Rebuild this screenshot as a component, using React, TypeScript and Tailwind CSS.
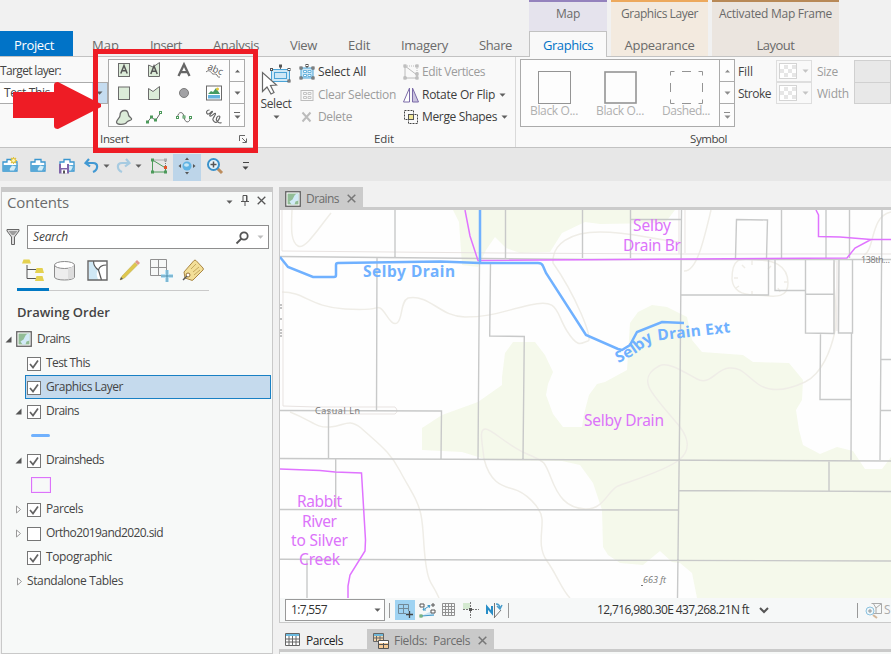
import { useLayoutEffect, useRef, useState } from "react";
import type { ReactNode } from "react";

/* Text that spreads its letters over the width given by its class. */
function T({ c, children }: { c: string; children: string }) {
  const outer = useRef<HTMLSpanElement>(null);
  const inner = useRef<HTMLSpanElement>(null);
  const [ls, setLs] = useState(0);
  useLayoutEffect(() => {
    if (outer.current && inner.current) {
      const natural = inner.current.getBoundingClientRect().width - ls * children.length;
      setLs((outer.current.clientWidth - natural) / children.length);
    }
  }, [children]);
  return (
    <span ref={outer} className={"block shrink-0 whitespace-nowrap leading-4 " + c}>
      <span ref={inner} style={{ letterSpacing: ls }}>{children}</span>
    </span>
  );
}

function Svg({ w, h, c = "", children }: { w: number; h: number; c?: string; children: ReactNode }) {
  return (
    <svg width={w} height={h} viewBox={`0 0 ${w} ${h}`} className={"block shrink-0 overflow-visible " + c} fill="none">
      {children}
    </svg>
  );
}

function Caret({ c = "", color = "#5f5f5f" }: { c?: string; color?: string }) {
  return <Svg w={7} h={4} c={c}><path d="M0.5 0.5h6L3.5 3.7z" fill={color} /></Svg>;
}

function Node({ x, y, color = "#4d9a5b" }: { x: number; y: number; color?: string }) {
  return <rect x={x - 1} y={y - 1} width="2" height="2" fill="#fff" stroke={color} strokeWidth="1" />;
}

function GalleryStrip({ dim = false }: { dim?: boolean }) {
  const k = dim ? "#8c8c8c" : "#666";
  return (
    <div className="flex w-[15px] shrink-0 flex-col border-l border-[#ababab] bg-[#fdfdfd]">
      <div className="flex h-[22px] items-center justify-center border-b border-[#ababab]">
        <Svg w={7} h={4}><path d="M1 3.5h5L3.5 0.8z" fill={k} /></Svg>
      </div>
      <div className="flex h-[22px] items-center justify-center border-b border-[#ababab]"><Caret color={k} /></div>
      <div className="flex h-[22px] flex-col items-center justify-center gap-[2px]">
        <span className={"h-px w-[6px] " + (dim ? "bg-[#8c8c8c]" : "bg-[#666]")} />
        <Caret color={k} />
      </div>
    </div>
  );
}

const gs = "#6b6b6b";
const gf = "#dcecd9";
const insertIcons: ReactNode[] = [
  <><rect x="3.5" y="3.5" width="11" height="13" fill={gf} stroke={gs} /><path d="M5.800 13.500 9 5.500l3.200 8M7 10.800h4" stroke="#555" strokeWidth="1.500" /></>,
  <><path d="M3.500 5 8 7l6.500-4.500v14h-11z" fill={gf} stroke={gs} /><path d="M5.800 14 9 6l3.200 8M7 11.200h4" stroke="#555" strokeWidth="1.500" /></>,
  <path d="M3.500 16 9 4.500 14.500 16M5.500 12.200h7" stroke="#666" strokeWidth="2.300" />,
  <><text x="2" y="9" fontSize="9.500" fill="#555" fontFamily="Open Sans" transform="rotate(24 2 9)">abc</text><path d="M1 12c3-3 5 0 6 1.500s4-.500 5 1.500 1 2.500 3 2" stroke="#777" /></>,
  <rect x="3.500" y="4" width="11" height="12.500" fill={gf} stroke={gs} />,
  <path d="M3.500 5.500 8 8.500l6.500-5v13h-11z" fill={gf} stroke={gs} />,
  <circle cx="9" cy="10" r="4.500" fill="#a2a2a5" stroke="#7b7b7b" />,
  <><rect x="1.500" y="3" width="15" height="14" fill="#fff" stroke={gs} /><path d="M3 11 6 8l2 1 3-4 4 6z" fill="#459b63" /><rect x="3" y="12" width="12" height="3.500" fill="#65b3df" /><circle cx="12.500" cy="6" r="1.500" fill="#e0c63b" /></>,
  <path d="M1.500 15C2 12 5 11 5 8.500 5 5 7 3.500 10 3.500s3 2 3.500 4.500 4 3 3 4.500-4 1-5 3-10 3-10-.500z" fill={gf} stroke={gs} strokeWidth="1.300" />,
  <><path d="M2.500 15 6.500 10l4 3.500 5-7.500" stroke={gs} /><Node x={2.500} y={15} /><Node x={6.500} y={10} /><Node x={10.500} y={13} /><Node x={15.500} y={5.500} /></>,
  <><path d="M2.500 10.500C3 4 8.500 4 9 10s6 7 6.500 0" stroke={gs} /><Node x={2.500} y={10.500} /><Node x={9} y={10} /><Node x={15.500} y={10.500} /></>,
  <path d="M4.500 3C1 3 1 6 2.500 7S7 3.500 7.500 4.500 3.500 8 5 9s4.500-3.500 5.500-2.500S7 11 8 13s3 3.500 4.500 1.500S16 9 14 9s-3.500 3-2 5 3 2.500 4.500 1.500" stroke="#666" strokeWidth="1.200" />,
];

function CommandIcon({ kind }: { kind: string }) {
  switch (kind) {
    case "all":
      return <Svg w={16} h={16}><rect x="2" y="4" width="12" height="10" fill="#cfe8f6" stroke="#4ba3d6" /><path d="M4.500 6.500h3v2h-3zM9 6.500h3v2H9zM4.500 10.500h3v2h-3zM9 10.500h3v2H9z" fill="#fff" stroke="#4ba3d6" strokeWidth=".8" /><path d="M8 2v2" stroke="#555" /><Node x={8} y={1.500} color="#555" /><Node x={2} y={4} color="#555" /><Node x={14} y={4} color="#555" /><Node x={2} y={14} color="#555" /><Node x={14} y={14} color="#555" /></Svg>;
    case "clear":
      return <Svg w={16} h={16}><rect x="2" y="3.500" width="12" height="10" stroke="#bdbdbd" /><path d="M4.500 5.500h3v2h-3zM9 5.500h3v2H9zM4.500 9.500h3v2h-3zM9 9.500h3v2H9z" stroke="#c5c5c5" /></Svg>;
    case "delete":
      return <Svg w={16} h={16}><path d="m3.500 3.500 8 9M11.500 3.500l-8 9" stroke="#bcbcbc" strokeWidth="2" /></Svg>;
    case "vertices":
      return <Svg w={16} h={16}><path d="M2 2v12h12M2 2l12 9v3" stroke="#bcbcbc" /><path d="M2 2h12v9" stroke="#bcbcbc" strokeDasharray="1 1" /><Node x={2} y={2} color="#aaa" /><Node x={14} y={2} color="#aaa" /><Node x={14} y={10} color="#aaa" /><Node x={2} y={14} color="#aaa" /><Node x={14} y={14} color="#aaa" /></Svg>;
    case "flip":
      return <Svg w={16} h={16}><path d="M6.500 1v14h-6z" fill="#fff" stroke="#7b6ba8" /><path d="M9.500 1v14h6z" fill="#cbc4df" stroke="#7b6ba8" /></Svg>;
    default:
      return <Svg w={16} h={16}><path d="M1.500 1.500h9v9h-9zM5.500 5.500h9v9h-9z" stroke="#444" strokeDasharray="2 1" /><rect x="5.500" y="5.500" width="5" height="5" fill="#f2e795" stroke="#555" /></Svg>;
  }
}

function Command({ kind, text, w, dim, caret }: { kind: string; text: string; w: string; dim?: boolean; caret?: boolean }) {
  return (
    <div className={"flex h-[22.500px] items-center text-xs " + (dim ? "text-[#9c9c9c]" : "text-[#3c3c3c]")}>
      <CommandIcon kind={kind} />
      <T c={"ml-[3px] " + w}>{text}</T>
      {caret && <Caret c="ml-1" />}
    </div>
  );
}

function SymbolSample({ kind, text }: { kind: number; text: string }) {
  return (
    <div className="flex w-[66px] flex-col items-center pt-[11px] text-xs text-[#b0b0b0]">
      <Svg w={33} h={32}>
        <rect x={kind === 1 ? 1 : 0.5} y={kind === 1 ? 1 : 0.5} width={kind === 1 ? 31 : 32} height={kind === 1 ? 31 : 32} stroke="#949494" strokeWidth={kind === 1 ? 1.6 : 1} strokeDasharray={kind === 2 ? "4 7.5 9 7.5 4 0" : undefined} />
      </Svg>
      <T c="w-[48px]">{text}</T>
    </div>
  );
}

function MapBadge() {
  return <Svg w={16} h={16}><rect x=".750" y=".750" width="14.500" height="14.500" fill="#fff" stroke="#606060" strokeWidth="1.300" /><path d="M2.500 2.500h11v11h-11z" fill="#92bd96" /><path d="M13.500 2.500v7l-3 1-1 3h-3l-2-3 3-2 2-4 2-2z" fill="#d2eaf7" /></Svg>;
}

function Swatch() {
  return (
    <div className="flex h-[22px] w-[36px] items-center border border-[#dedede]">
      <Svg w={18} h={16} c="ml-[2px]">
        <rect x=".5" y=".5" width="17" height="15" fill="#fff" stroke="#d4d4d4" />
        {[0, 1, 2, 3, 4, 5, 6, 7, 8, 9, 10, 11].filter((i) => ((i % 4) + Math.floor(i / 4)) % 2 === 1).map((i) => <rect key={i} x={1 + (i % 4) * 4} y={2 + Math.floor(i / 4) * 4} width="4" height="4" fill="#e6e6e6" />)}
      </Svg>
      <Caret c="ml-[5px]" color="#c4c4c4" />
    </div>
  );
}

function Tabs() {
  return (
    <header className="flex h-[57px] shrink-0 border-b border-[#c2c2c2] bg-[#f1f1f1] text-[13px] text-[#6a6a6a]">
      <div className="mt-[31px] flex w-[73px] items-center pl-[14px] bg-[#0173c7] pt-[2px] text-white"><T c="w-[40px]">Project</T></div>
      <nav className="flex w-[456px] pt-[37px]">
        <T c="ml-[19px] w-[27px]">Map</T>
        <T c="ml-[31px] w-[32px]">Insert</T>
        <T c="ml-[31px] w-[46px]">Analysis</T>
        <T c="ml-[31px] w-[27px]">View</T>
        <T c="ml-[31px] w-[22px]">Edit</T>
        <T c="ml-[31px] w-[47px]">Imagery</T>
        <T c="ml-[31px] w-[33px]">Share</T>
      </nav>
      <div className="flex w-[78px] flex-col items-center border-t-2 border-[#9482bd] bg-[#e5e3ed]">
        <T c="mt-[4px] w-[24px] text-xs">Map</T>
        <div className="-mb-px mt-[9px] flex w-full grow justify-center border border-b-0 border-[#c2c2c2] bg-[#f9f9f9] pt-[5px] text-[#0173c7]"><T c="w-[50px]">Graphics</T></div>
      </div>
      <div className="ml-1 flex w-[97px] flex-col items-center border-t-2 border-[#eda95d] bg-[#f3eadf]">
        <T c="mt-[4px] w-[77px] text-xs">Graphics Layer</T><T c="mt-[15px] w-[70px]">Appearance</T>
      </div>
      <div className="ml-1 flex w-[127px] flex-col items-center border-t-2 border-[#b88957] bg-[#ebe5df]">
        <T c="mt-[4px] w-[113px] text-xs">Activated Map Frame</T><T c="mt-[15px] w-[38px]">Layout</T>
      </div>
    </header>
  );
}

function Ribbon() {
  return (
    <section className="flex h-[91px] shrink-0 overflow-hidden border-b border-[#c2c2c2] bg-[#f9f9f9] text-xs text-[#444]">
      <div className="w-[100px] pt-[6px]">
        <T c="w-[61px]">Target layer:</T>
        <div className="mt-[3px] flex h-[22px] w-[108px] items-center border border-l-0 border-[#ababab] bg-white">
          <T c="ml-1 w-[46px]">Test This</T>
          <div className="ml-auto flex h-[20px] w-[15px] items-center justify-center bg-[#c5dcf0]"><Caret /></div>
        </div>
      </div>
      <div className="z-10 flex w-[153px] flex-col">
        <div className="ml-2 mt-[2px] flex h-[68px] w-[137px] border border-[#ababab] bg-[#fdfdfd]">
          <div className="grid w-[120px] grow grid-cols-4 grid-rows-[18px_28px_20px] place-items-center">
            {insertIcons.map((icon, i) => <Svg key={i} w={18} h={19}>{icon}</Svg>)}
          </div>
          <GalleryStrip />
        </div>
        <div className="flex items-center pt-[4px]">
          <T c="w-[29px] text-[11.5px]">Insert</T>
          <Svg w={8} h={8} c="ml-[110px]"><path d="M.5 6V.5H6M3 3l4 4M7.500 3.500v4h-4" stroke="#666" /></Svg>
        </div>
      </div>
      <div className="flex w-[263px] flex-col border-r border-[#dadada]">
        <div className="flex h-[74px] pt-[3px]">
          <div className="flex w-[46px] flex-col items-center pt-1">
            <Svg w={30} h={31}><rect x="10.500" y="5.500" width="18" height="12" fill="#cfe8f6" stroke="#4ba3d6" /><rect x="13.500" y="8.500" width="12" height="6" stroke="#4ba3d6" /><path d="M19.500 2v3" stroke="#666" /><Node x={19.500} y={2} color="#555" /><Node x={10.500} y={5.500} color="#555" /><Node x={28} y={5.500} color="#555" /><Node x={28} y={17} color="#555" /><path d="M1.500 8.500v19l4.500-4.500 4 7 3-1.500-3.500-7 6-.500z" fill="#fff" stroke="#666" strokeWidth="1.200" /></Svg>
            <T c="mt-px w-[31px]">Select</T><Caret c="mt-[3px]" />
          </div>
          <div className="w-[104px] pt-px">
            <Command kind="all" text="Select All" w="w-[48px]" />
            <Command kind="clear" text="Clear Selection" w="w-[78px]" dim />
            <Command kind="delete" text="Delete" w="w-[34px]" dim />
          </div>
          <div className="pt-px">
            <Command kind="vertices" text="Edit Vertices" w="w-[63px]" dim />
            <Command kind="flip" text="Rotate Or Flip" w="w-[73px]" caret />
            <Command kind="merge" text="Merge Shapes" w="w-[75px]" caret />
          </div>
        </div>
        <T c="ml-[121px] w-[20px] text-[11.5px]">Edit</T>
      </div>
      <div className="ml-1 flex w-[371px] shrink-0 flex-col">
        <div className="flex h-[74px] pt-[2px]">
          <div className="flex h-[68px] w-[215px] border border-[#ababab] bg-[#fdfdfd]">
            <div className="flex w-[199px]">
              <SymbolSample kind={0} text="Black O..." /><SymbolSample kind={1} text="Black O..." /><SymbolSample kind={2} text="Dashed..." />
            </div>
            <GalleryStrip dim />
          </div>
          <div className="ml-[3px] w-[38px] shrink-0 pt-[5px]"><T c="w-[15px]">Fill</T><T c="mt-[6px] w-[33px]">Stroke</T></div>
          <div className="shrink-0 pt-px"><Swatch /><Swatch /></div>
          <div className="ml-[5px] w-[37px] shrink-0 pt-[5px] text-[#9c9c9c]"><T c="w-[21px]">Size</T><T c="mt-[6px] w-[32px]">Width</T></div>
          <div className="mt-px h-[44px] w-[40px] border border-[#d0d0d0] bg-[#e8e8e8]"><div className="h-[22px] border-b border-[#d0d0d0]" /></div>
        </div>
        <T c="ml-[170px] w-[37px] text-[11.5px]">Symbol</T>
      </div>
    </section>
  );
}

function QuickBar() {
  const folder = <><path d="M1 14V5h4V2.500h6V5h4v9z" fill="#fff" stroke="#3a96cf" strokeWidth="1.300" /><path d="M1 14.500V8h15l-2.500 6.500z" fill="#58a9d8" /><path d="M8 13.500c-1-2 1-3 2-5l4 1-2 4z" fill="#d5edf7" /></>;
  return (
    <div className="flex h-[33px] shrink-0 items-center bg-[#e7e7e7] pt-[2px]">
      <Svg w={18} h={18} c="ml-[2px]">{folder}<path d="M11.500 0v7M8 3.500h7M9 1l5 5M14 1 9 6" stroke="#dfc242" strokeWidth="1.200" /><circle cx="11.500" cy="3.500" r="2" fill="#fff4b2" stroke="#dfc242" /></Svg>
      <Svg w={18} h={18} c="ml-[10px]">{folder}</Svg>
      <Svg w={18} h={18} c="ml-[11px]">{folder}<path d="M0 7h10v9.500H0z" fill="#8065aa" /><path d="M2 7h6v4H2zM2.500 12.500H8v4H2.500z" fill="#fff" /><path d="M4 13.500h2v3H4z" fill="#555" /></Svg>
      <Svg w={15} h={16} c="ml-[7px]"><path d="M5 1 1.500 5 6 8.500M2 5h7c6 0 5 7 0 9" stroke="#4299d3" strokeWidth="2.200" /></Svg>
      <Caret c="ml-[4px]" />
      <Svg w={15} h={16} c="ml-[6px]"><path d="M10 1 13.500 5 9 8.500M13 5H6c-6 0-5 7 0 9" stroke="#a7cbe1" strokeWidth="2.200" /></Svg>
      <Caret c="ml-[4px]" />
      <Svg w={18} h={18} c="ml-[8px]"><path d="M2.500 3v12h13M2.500 3l13 8v4" stroke="#4e9c5b" /><path d="M2.500 3h13v8" stroke="#777" strokeDasharray="1 1" /><Node x={2.500} y={3} /><Node x={2.500} y={15} /><Node x={15.500} y={15} /><Node x={15.500} y={3} color="#aaa" /><rect x="14" y="9" width="3" height="3" fill="#e65329" /></Svg>
      <div className="ml-[5px] flex h-[27px] w-[28px] items-center justify-center self-end bg-[#bdd5e9] pb-[3px]"><Svg w={18} h={18}><circle cx="9" cy="9" r="4.500" fill="#5fb3e4" /><ellipse cx="8.500" cy="8" rx="2.500" ry="1.800" fill="#c7e7f5" /><path d="m7 3 2-2.500L11 3zM7 15l2 2.500 2-2.500zM3 7 .5 9 3 11zM15 7l2.500 2-2.500 2z" fill="#555" /></Svg></div>
      <Svg w={18} h={18} c="ml-[5px]"><path d="m11 11 5 5" stroke="#bd8d5d" strokeWidth="3" /><circle cx="7.500" cy="7.500" r="5.500" fill="#e8f6fc" stroke="#3a91ca" strokeWidth="2" /><path d="M4.500 7.500h6M7.500 4.500v6" stroke="#555" strokeWidth="1.500" /></Svg>
      <div className="ml-[18px] flex flex-col items-center gap-[3px]"><span className="h-px w-[6px] bg-[#444]" /><Caret color="#444" /></div>
    </div>
  );
}

function Check({ on = true }: { on?: boolean }) {
  return <Svg w={14} h={14}><rect x=".5" y=".5" width="13" height="13" fill="#fff" stroke="#767676" />{on && <path d="m3 7 3 3.500L11 3.500" stroke="#636363" strokeWidth="1.700" />}</Svg>;
}

function Arrow({ open }: { open: boolean }) {
  return open
    ? <Svg w={7} h={7}><path d="M6.500.5v6h-6z" fill="#555" /></Svg>
    : <Svg w={7} h={9}><path d="M1.500 1v7l4-3.500z" fill="#fff" stroke="#999" /></Svg>;
}

function Layer({ text, w, arrow, on = true, selected }: { text: string; w: string; arrow?: "open" | "shut"; on?: boolean; selected?: boolean }) {
  return (
    <div className="flex h-6 items-center pl-[13px]">
      <div className="w-[10px]">{arrow && <Arrow open={arrow === "open"} />}</div>
      <div className={"flex h-6 w-[246px] items-center border pl-px " + (selected ? "border-[#1980c4] bg-[#c5daed]" : "border-transparent")}>
        <div className="pt-px"><Check on={on} /></div><T c={"ml-[5px] " + w}>{text}</T>
      </div>
    </div>
  );
}

function Contents() {
  return (
    <aside className="mt-[6px] flex w-[272px] shrink-0 flex-col border border-t-[5px] border-[#c9c9c9] bg-[#f7f9f8] text-xs text-[#444]">
      <div className="flex h-[28px] items-center pl-[5px]">
        <T c="mb-[9px] w-[62px] text-[15px] text-[#6c6c6c]">Contents</T>
        <Caret c="ml-[157px] mb-[8px]" />
        <Svg w={8} h={12} c="mb-[11px] ml-[8px]"><path d="M2 .5h4v6H2zM0 6.500h8M4 7v4M5.500 1v5" stroke="#555" /></Svg>
        <Svg w={9} h={9} c="mb-[12px] ml-[8px]"><path d="m.7.700 7.600 7.600M8.300.700.700 8.300" stroke="#555" strokeWidth="1.300" /></Svg>
      </div>
      <div className="mt-[5px] flex items-center">
        <Svg w={14} h={18} c="ml-1"><path d="M1 1.500h12v1.500L8.500 9v7.500h-3V9L1 3z" fill="#ddd" stroke="#666" /><path d="M2.500 3h9L8 7H6z" fill="#9d9d9d" /></Svg>
        <div className="ml-[7px] flex h-6 w-[242px] items-center border border-[#8e8e8e] bg-white">
          <T c="ml-[5px] w-[35px] italic">Search</T>
          <Svg w={13} h={13} c="ml-[168px]"><circle cx="8" cy="5" r="3.700" stroke="#555" strokeWidth="1.800" /><path d="m5.500 7.500-5 5" stroke="#555" strokeWidth="1.800" /></Svg>
          <Caret c="ml-[8px]" color="#bdbdbd" />
        </div>
      </div>
      <div className="ml-[15px] mt-[7px] flex h-[35px] w-[192px] border-b border-[#cacaca] pt-px">
        <div className="h-[34px] w-8 border-b-[3px] border-[#0179c4] pl-[5px] pt-[2px]"><Svg w={23} h={24}><path d="M5 6v13.500h9M5 10.500h9" stroke="#555" /><path d="M1.500.5h6l1.500 4H0zM14.500 9h6l1.500 5h-9zM14.500 17h6l1.500 5h-9z" fill="#e4d14f" /></Svg></div>
        <Svg w={22} h={24} c="ml-[5px] mt-[3px]"><path d="M.5 5v12c0 4 20 4 20 0V5" fill="#ededed" stroke="#8b8b8b" /><ellipse cx="10.500" cy="5" rx="10" ry="3.500" fill="#fff" stroke="#8b8b8b" /><path d="M14 8.500 20 6v12l-6 1.500z" fill="#ddd" /></Svg>
        <Svg w={21} h={22} c="ml-[11px] mt-[3px]"><path d="M1 1h19v19H1z" fill="#fff" /><path d="M1.700 1.700h5c0 4 1 6 4.800 8-3 3-1.500 7 0 10.300H1.700z" fill="#cfe8f5" /><path d="M6.500 1c0 4 2 7 5 9l3 10M11.500 10c1-4 4-5 8-5" stroke="#555" strokeWidth="1.200" /><path d="M1 1h19v19H1z" stroke="#666" strokeWidth="1.400" /></Svg>
        <Svg w={20} h={22} c="ml-[12px] mt-[3px]"><path d="m0 20 2-4L15 2.500l2.500 2.500L4.500 18z" fill="#dfc74d" stroke="#b9a84c" strokeWidth=".5" /><path d="m15 2 2-2 3 3-2 2z" fill="#e2988b" /><path d="m0 20 1-3 2 2z" fill="#555" /></Svg>
        <Svg w={23} h={24} c="ml-[10px] mt-[2px]"><path d="M.5.5h16v16H.5zM8.500.5v16M.5 8.500h16" stroke="#909090" /><path d="M17 11v12M11 17h12" stroke="#b7e1f4" strokeWidth="4" /><path d="M17 11v12M11 17h12" stroke="#4b8eae" /></Svg>
        <Svg w={22} h={23} c="ml-[9px] mt-[2px]"><path d="M2 13 12 1.500q1-.8 2 0L21 9q.8 1 0 2L11 21q-1 .8-2 0L3 19z" fill="#f3df98" stroke="#aa8745" strokeLinejoin="round" /><path d="m9 10 5-5M11 13l6-5M12 16l6-5" stroke="#c5a960" /><circle cx="6" cy="16" r="2" fill="#fff" stroke="#946f36" /><path d="m5 17-4 4" stroke="#555" strokeWidth="1.500" /></Svg>
      </div>
      <T c="ml-[15px] mt-[13px] w-[93px] text-[13px] font-semibold">Drawing Order</T>
      <div className="mt-[7px]">
        <div className="flex h-6 items-center pl-[3px]"><Arrow open /><div className="ml-[4px]"><MapBadge /></div><T c="ml-[5px] w-[33px]">Drains</T></div>
        <Layer text="Test This" w="w-[44px]" />
        <Layer text="Graphics Layer" w="w-[77px]" selected />
        <Layer text="Drains" w="w-[33px]" arrow="open" />
        <div className="flex h-[25px] items-center pl-[29px]"><span className="h-[3px] w-[19px] rounded-sm bg-[#70b1fd]" /></div>
        <Layer text="Drainsheds" w="w-[58px]" arrow="open" />
        <div className="flex h-[25px] items-center pl-[29px]"><span className="h-4 w-5 border border-[#dc73fa] shadow-[inset_0_0_0_1px_#f5e4fc]" /></div>
        <Layer text="Parcels" w="w-[37px]" arrow="shut" />
        <Layer text="Ortho2019and2020.sid" w="w-[117px]" arrow="shut" on={false} />
        <Layer text="Topographic" w="w-[66px]" />
        <div className="flex h-6 items-center pl-[14px]"><Arrow open={false} /><T c="ml-[4px] w-[96px]">Standalone Tables</T></div>
      </div>
    </aside>
  );
}

function MapView() {
  return (
    <svg viewBox="280 210 611 388" width="611" height="388" className="block shrink-0 bg-[#fefefe]" fill="none">
      <g fill="#f5f9eb">
        <path d="M453 210 459 222 462 265 478 267 486 250 495 237 506 248 520 253 550 252 562 233 585 222 600 224 665 223 675 210z" />
        <path d="M513 342 535 342 545 355 553 372 548 384 546 395 553 414 563 427 582 427 584 414 589 395 597 384 605 382 627 370 630 323 638 312 652 305 667 307 687 317 692 340 702 352 743 355 753 362 789 363 803 380 802 400 796 410 799 430 803 445 820 454 837 447 853 451 865 469 882 469 891 457V598H697L692 573 680 563 672 562 660 551 643 565 620 563 608 555 603 547 602 510 593 483 580 465 562 461 488 460 462 452 422 450V428L442 415 478 402 502 385V377L505 353z" />
      </g>
      <g stroke="#efede7" strokeWidth="1.500">
        <path d="M292 210C291 230 291 242 298 246S318 229 331 213M282 292C305 292 310 307 345 309S375 306 380 308 391 327 397 323 400 302 408 298C430 294 440 317 465 317S500 312 530 305 555 312 567 331 582 342 588 341 575 294 553 263C552 244 570 232 600 232S645 238 679 242" />
        <path d="M290 412C313 421 315 428 330 427S348 418 361 428C381 446 390 452 400 471S418 500 421 515 423 545 426 565 432 582 439 598M484 459C482 440 479 430 485 429S505 444 525 453 544 460 551 478 566 508 585 509 608 490 618 486 665 471 679 460 686 435 680 427 653 397 649 387 650 371 659 366 684 372 697 379 716 369 729 368 745 375 758 384 788 390 805 382 831 350 835 331 830 270 835 261M484 459C490 482 501 486 513 489S541 507 542 519 537 547 547 561 562 590 570 598" />
        <path d="M684 271C697 272 704 239 711 210M891 212C870 216 875 250 864 255M732 279C732 253 745 260 758 260S788 264 788 283 768 295 755 295 733 291 732 279M734 278h4M742 265l3 3M752 260v5M771 266l-3 3M788 282h-4M780 292l-2-4M752 295v-4M736 288l3-2" />
      </g>
      <g stroke="#e8e3e1"><path d="M282 210V251L500 253 679 254H891M283 260v146L317 407H395q4 4 0 7H318M679 210v44M685 210v43M837 261v70M834 263v68" /></g>
      <g stroke="#c8c9c9" strokeWidth="1.400">
        <path d="M280 256.500 591 259.500H891M395 210v47M505.500 210v48M582.500 210v48M630.500 210v48M681.500 210 680 390 677.500 598M377 258 376.500 410M479.500 262 478 459M490.500 263 489.700 336 524.300 336.500 523 459M280 410.500 441.500 411 441 459M328.500 410v49M280 458.500 891 461M335.700 459v50M280 509.500 678 510M280 559.300 891 561M307 559v39M631 219.500h51M735.500 258 736.500 219.500 767.500 220 766.500 258M781.500 210v48M826 210v48M849.500 210v48M882 210 880 460M681 294.700 768.500 295V260M775 260v30.500h30.500M805.500 260v73L834 333.500V260M805.500 294.300H834M839 260 838.500 333H852.500V260M820.500 333 820 399.500H851M851.500 333 851 460M881 359.500h10M881 410.500h10M678.500 490.500 891 491.500M829 461v29.500" />
      </g>
      <g fill="#777" fontFamily="Open Sans, sans-serif" fontSize="9">
        <text x="315" y="413.500" textLength="45">Casual Ln</text><text x="861" y="263" textLength="29">138th…</text>
        <text x="643" y="582.500" fontStyle="italic" textLength="23">663 ft</text><rect x="641" y="585" width="2" height="1" />
        <path d="M281 304v6M281 318v3M281 329v8" stroke="#888" strokeDasharray="2 1" />
      </g>
      <path d="M465 210 470 236 478 260.500 847 258 855 248 871 239.500H891M871 239.500 840 237 818.500 236.500V215L816 210M280 469 320 470.500 335 472 361.500 473 365.500 540 365 551 350 575 348 586V598" stroke="#e073ff" strokeWidth="1.500" />
      <path d="M480 210v53M280 257 288 267 313 277H334q2 0 2-2V265q0-2 2-2L440 261.500 480 263H538q4 0 5 3l3 7 40 62L618 349l4 1 8-5 7-13 25-10 22 1" stroke="#70b1ff" strokeWidth="2.500" />
      <g fontFamily="Noto Sans, Open Sans, sans-serif" fontSize="15.500">
        <path id="ext" d="M618 363Q634 356 644 347T659 340.500L760 329" fill="none" />
        <g fill="#70b1ff" fontWeight="700">
          <text x="363" y="277" textLength="92">Selby Drain</text>
          <text fontSize="15.500"><textPath href="#ext" textLength="120">Selby Drain Ext</textPath></text>
        </g>
        <g fill="#dc73fa">
          <text x="633" y="231" textLength="38">Selby</text><text x="623" y="250.500" textLength="58">Drain Br</text>
          <text x="584" y="425.500" textLength="80">Selby Drain</text>
          <text x="297" y="507" textLength="45">Rabbit</text><text x="302" y="526.500" textLength="35">River</text>
          <text x="291" y="545.500" textLength="57">to Silver</text><text x="299" y="565" textLength="41">Creek</text>
        </g>
      </g>
    </svg>
  );
}

function Cross() {
  return <Svg w={9} h={9}><path d="m.7.700 7.600 7.600M8.300.700.700 8.300" stroke="#777" strokeWidth="1.500" /></Svg>;
}

function MapPane() {
  return (
    <main className="ml-[6px] mt-[6px] flex w-[612px] shrink-0 flex-col overflow-hidden text-xs">
      <div className="flex h-5 w-[84px] shrink-0 items-center bg-[#cbcbcb] pl-[6px] pt-[3px] text-[#6b6b6b]"><MapBadge /><T c="ml-[5px] w-[33px]">Drains</T><div className="ml-2"><Cross /></div></div>
      <div className="h-[3px] shrink-0 bg-[#cbcbcb]" />
      <div className="shrink-0 border-l border-[#c9c9c9]"><MapView /></div>
      <div className="flex h-[25px] shrink-0 items-center border-b border-l border-[#cacaca] bg-[#f6f8f8] text-[#333]">
        <div className="ml-[5px] flex h-[22px] w-[100px] items-center border border-[#999] bg-white"><T c="ml-[5px] w-[36px]">1:7,557</T><Caret c="ml-auto mr-[3px]" /></div>
        <span className="ml-[4px] h-[15px] w-px bg-[#999]" />
        <div className="ml-[5px] flex h-5 w-5 items-center justify-center bg-[#9fd3f2]"><Svg w={17} h={17}><path d="M1.500 2.500h10v9h-10zM6.500 2.500v9M1.500 6.500h10" stroke="#718998" /><path d="M9 9h7v7H9z" fill="#9fd3f2" /><path d="M12.500 9v7M9 12.500h7" stroke="#444" strokeWidth="1.300" /></Svg></div>
        <Svg w={17} h={17} c="ml-[4px]"><path d="m2 14 13-6v6z" fill="#c8e3f4" /><path d="m3 14 12-1M4 8l7-4.500M5 5.500 4 8h3M8.500 3.500H11L10 6" stroke="#4299c7" /><path d="M1 2h4v3H1zM12 8h4v3h-4z" fill="#fff" stroke="#555" /><path d="M12 3h4M14 1v4" stroke="#555" /><Node x={2} y={14} /></Svg>
        <Svg w={14} h={14} c="ml-[6px]"><path d="M.5.500h12v12H.5zM3.500.5v12M6.500.5v12M9.500.5v12M.5 3.500h12M.5 6.500h12M.5 9.500h12" stroke="#919191" /></Svg>
        <Svg w={16} h={16} c="ml-[7px]"><path d="M0 1h7v6H0z" fill="#d4e9d0" /><path d="M7.500 0v16M0 7.500h16" stroke="#777" strokeDasharray="2 1" /><path d="M6 6h3v3H6z" fill="#555" /></Svg>
        <Svg w={17} h={17} c="ml-[6px]"><path d="M2 12V5l5 6V4" stroke="#278dc7" strokeWidth="2" /><path d="M9.500 1v15M9 16 16 8" stroke="#777" /><path d="M11 2q4 0 4 5M12 4l3 3 2-4" stroke="#4a9dcb" strokeWidth="1.500" /></Svg>
        <span className="ml-[6px] h-[15px] w-px bg-[#999]" />
        <T c="ml-[88px] w-[152px]">12,716,980.30E 437,268.21N ft</T>
        <Svg w={10} h={7} c="ml-[10px]"><path d="m1 1 4 4 4-4" stroke="#555" strokeWidth="2" /></Svg>
        <span className="ml-[88px] h-[15px] w-px bg-[#999]" />
        <Svg w={17} h={17} c="ml-[7px] opacity-60"><path d="M6.500 1.500h10v10h-10M8 1l3 5v5M11 6l5-4" stroke="#777" /><path d="m8 13 4 3" stroke="#bd8d5d" strokeWidth="2" /><circle cx="5" cy="9" r="4" fill="#e8f6fc" stroke="#479fcf" /><path d="M3 9h4M5 7v4" stroke="#555" /></Svg>
        <T c="ml-[2px] w-[6px] text-[#aaa]">S</T>
      </div>
      <div className="mt-[6px] flex h-5 shrink-0 items-center text-[#222]">
        <Svg w={16} h={14} c="ml-[6px] mt-px"><path d="M.5.500h14v12H.5zM4 2v10M7.500 2v10M11 2v10M.5 6h14M.5 9h14" stroke="#666" fill="#fff" /><path d="M1 1h13v2H1z" fill="#6abae0" /></Svg>
        <T c="ml-[5px] mt-[3px] w-[37px]">Parcels</T>
        <div className="ml-[24px] flex h-5 w-[127px] items-center bg-[#c9c9c9] pt-[3px] text-[#6c6c6c]">
          <Svg w={17} h={16} c="ml-[6px]"><path d="M.5.500h10v8H.5zM3.500 2v6M7 2v6M.5 5h10" fill="#f4d6ad" stroke="#666" /><path d="M1 1h9v2H1z" fill="#6eb7d8" /><path d="M5.500 7.500h10v8h-10zM10.500 9v6M5.500 11.500h10" fill="#f4c994" stroke="#555" /><path d="M6 8h9v2H6z" fill="#fff" /></Svg>
          <T c="ml-[4px] w-[33px]">Fields:</T><T c="ml-[6px] w-[37px]">Parcels</T><div className="ml-2"><Cross /></div>
        </div>
      </div>
      <div className="h-[3px] shrink-0 bg-[#cacaca]" />
      <div className="h-[3px] shrink-0 border-l border-[#cacaca] bg-[#f7f9f8]" />
    </main>
  );
}

export default function App() {
  return (
    <div className="relative flex h-[654px] w-[891px] flex-col overflow-hidden bg-[#f1f1f1] font-['Open_Sans','Noto_Sans',sans-serif]">
      <Tabs />
      <Ribbon />
      <QuickBar />
      <div className="flex min-h-0 grow pl-px"><Contents /><MapPane /></div>
      <svg className="absolute left-0 top-0 z-20" width="260" height="154" fill="none">
        <path d="M95.500 51.500h160v99h-160z" stroke="#ee1c25" strokeWidth="5" />
        <path d="M13 92H54V85q0-3 4-3L101 104v3L58 129q-4 0-4-3V118H13z" fill="#ee1c25" />
      </svg>
    </div>
  );
}
